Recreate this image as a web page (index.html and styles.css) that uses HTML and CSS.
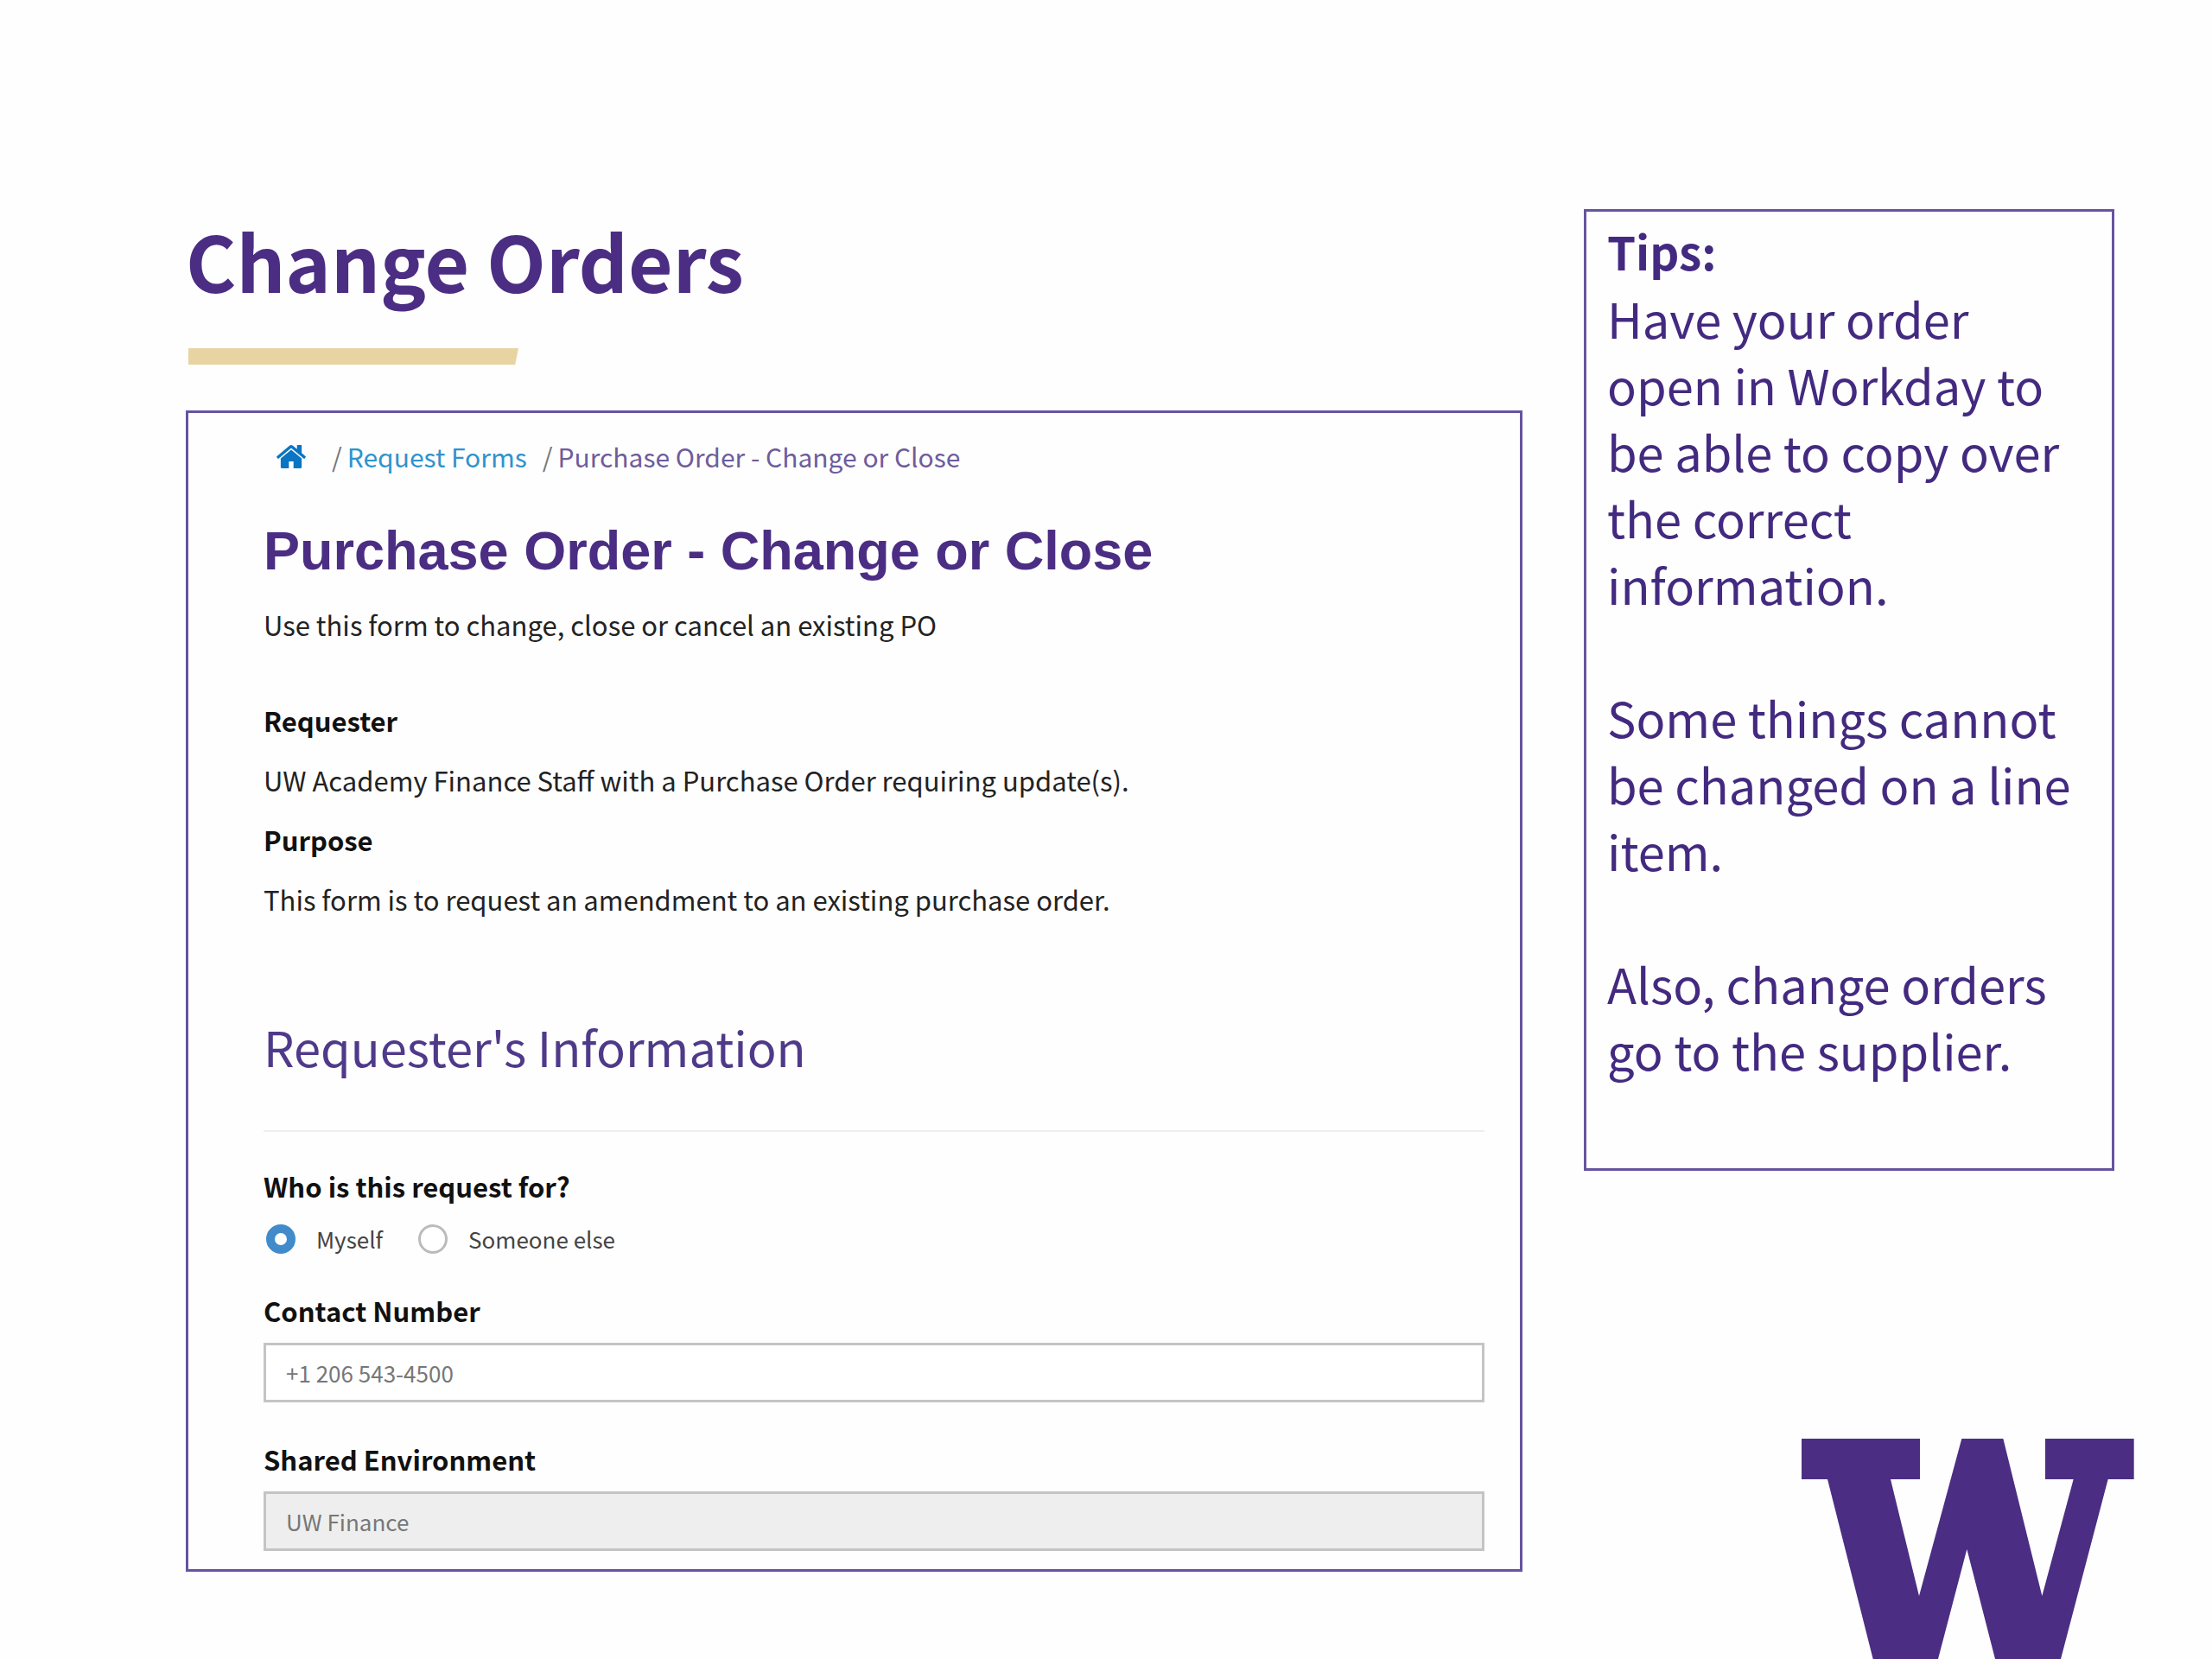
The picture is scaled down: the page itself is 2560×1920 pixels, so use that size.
FILE: index.html
```html
<!DOCTYPE html>
<html lang="en">

<head>
    <meta charset="UTF-8">
    <meta name="viewport" content="width=device-width, initial-scale=1.0">
    <title>Change Orders</title>
    <link rel="stylesheet" href="styles.css">
</head>

<body>
    <div class="slide">
        <main class="main">
            <h1 class="title">Change Orders</h1>
            <div class="bar"></div>
            <div class="panel">
                <nav class="crumbs">
                    <a class="home" href="#" aria-label="Home">
                        <svg viewBox="89 253 1614 1283" aria-hidden="true">
                            <path d="M1472 992v480q0 26-19 45t-45 19h-384v-384h-256v384h-384q-26 0-45-19t-19-45v-480q0-1 .5-3t.5-3l575-474 575 474q1 2 1 6zm223-69l-62 74q-8 9-21 11h-3q-13 0-21-7l-692-577-692 577q-12 8-24 7-13-2-21-11l-62-74q-8-10-7-23.5t11-21.5l719-599q32-26 76-26t76 26l244 204v-195q0-14 9-23t23-9h192q14 0 23 9t9 23v408l219 182q10 8 11 21.5t-7 23.5z"/>
                        </svg>
                    </a>
                    <span class="crumb"><span class="sep">/</span><a href="#">Request Forms</a></span>
                    <span class="crumb"><span class="sep">/</span>Purchase Order - Change or Close</span>
                </nav>
                <h2 class="formTitle">Purchase Order - Change or Close</h2>
                <p class="lead">Use this form to change, close or cancel an existing PO</p>
                <div class="about">
                    <h3>Requester</h3>
                    <p>UW Academy Finance Staff with a Purchase Order requiring update(s).</p>
                    <h3>Purpose</h3>
                    <p>This form is to request an amendment to an existing purchase order.</p>
                </div>
                <form>
                    <h2 class="section">Requester's Information</h2>
                    <fieldset class="field">
                        <legend>Who is this request for?</legend>
                        <div class="radios">
                            <label><input type="radio" name="for" checked>Myself</label>
                            <label><input type="radio" name="for">Someone else</label>
                        </div>
                    </fieldset>
                    <div class="field">
                        <label for="contact">Contact Number</label>
                        <input class="text" type="text" id="contact" value="+1 206 543-4500">
                    </div>
                    <div class="field">
                        <label for="environment">Shared Environment</label>
                        <input class="text" type="text" id="environment" value="UW Finance" readonly>
                    </div>
                </form>
            </div>
        </main>
        <aside class="side">
            <div class="tips">
                <h2>Tips:</h2>
                <p>Have your order open in Workday to be able to copy over the correct information.</p>
                <p>Some things cannot be changed on a line item.</p>
                <p>Also, change orders go to the supplier.</p>
            </div>
            <svg class="logo" viewBox="0 0 1155 765" role="img" aria-label="W">
                <path d="M0 0H411V141H309L408 546L556 0H700L835 546L944 141H846V0H1154V141H1064L900 765H672L574 384L474 765H248L90 141H0Z"/>
            </svg>
        </aside>
    </div>
</body>

</html>
```
FILE: styles.css
```css
* {
    box-sizing: border-box;
}

body {
    margin: 0;
    background: #fefefe;
    color: #222222;
    font-family: "Noto Sans CJK SC", "Noto Sans", sans-serif;
    font-size: 31px;
    line-height: 48px;
}

h1,
h2,
h3,
p {
    margin: 0;
}

a {
    color: #2f93cc;
    text-decoration: none;
}

.slide {
    display: grid;
    grid-template-columns: 1547fr 614fr;
    gap: 71px;
    min-height: 100vh;
    padding: 242px 113px 0 215px;
}

.title {
    color: #4b2e83;
    font-size: 89px;
    line-height: 118px;
}

.bar {
    width: 382px;
    height: 19px;
    margin: 43px 0 53px 3px;
    background: #e8d3a2;
    clip-path: polygon(0 0, 100% 0, 99% 100%, 0 100%);
}

.panel {
    padding: 28px 41px 21px 87px;
    border: 3px solid #6654a0;
}

/* breadcrumbs */
.crumbs {
    display: flex;
    align-items: center;
    gap: 18px;
    padding-left: 15px;
    color: #6f5c9c;
    font-size: 30px;
    line-height: 44px;
}

.home {
    display: flex;
    margin-right: 12px;
}

.home svg {
    width: 34px;
    height: 27px;
    fill: #0a75c2;
}

.sep {
    margin-right: 6px;
    color: #777777;
}

.formTitle {
    margin-top: 51px;
    color: #4b2e83;
    font-family: "Liberation Sans", Arial, sans-serif;
    font-size: 63px;
    line-height: 72px;
}

.lead {
    margin-top: 26px;
}

.about {
    display: grid;
    gap: 21px;
    margin-top: 63px;
}

.about h3,
.field > label,
.field legend {
    display: block;
    padding: 0;
    color: #111111;
    font-size: 31px;
    font-weight: 700;
}

.section {
    margin: 106px 0 39px;
    padding-bottom: 57px;
    border-bottom: 2px solid #eeeeee;
    color: #4f3a8a;
    font-size: 56px;
    font-weight: 400;
    line-height: 80px;
}

.field {
    margin: 0 0 42px;
    padding: 0;
    border: 0;
}

.field:last-child {
    margin-bottom: 0;
}

.radios {
    display: flex;
    gap: 38px;
    margin-top: 20px;
}

.radios label {
    display: flex;
    align-items: center;
    gap: 24px;
    color: #444444;
    font-size: 26px;
    line-height: 34px;
}

.radios input {
    appearance: none;
    width: 34px;
    height: 34px;
    margin: 0 0 0 3px;
    border: 3px solid #bbbbbb;
    border-radius: 50%;
    background: #ffffff;
}

.radios input:checked {
    border: 10px solid #428bca;
}

.text {
    display: block;
    width: 100%;
    height: 69px;
    margin-top: 13px;
    padding: 0 23px;
    border: 3px solid #c4c4c4;
    background: #ffffff;
    color: #777777;
    font-family: inherit;
    font-size: 26px;
}

.text:read-only {
    background: #eeeeee;
}

/* right column */
.side {
    display: flex;
    flex-direction: column;
    justify-content: space-between;
}

.tips {
    padding: 7px 24px 99px;
    border: 3px solid #6654a0;
    color: #432a80;
    font-size: 56px;
    line-height: 77px;
}

.tips h2 {
    font-size: 53px;
}

.tips p + p {
    margin-top: 77px;
}

.logo {
    display: block;
    width: 385px;
    margin: 0 -23px 0 auto;
    fill: #4b2e83;
}
```
